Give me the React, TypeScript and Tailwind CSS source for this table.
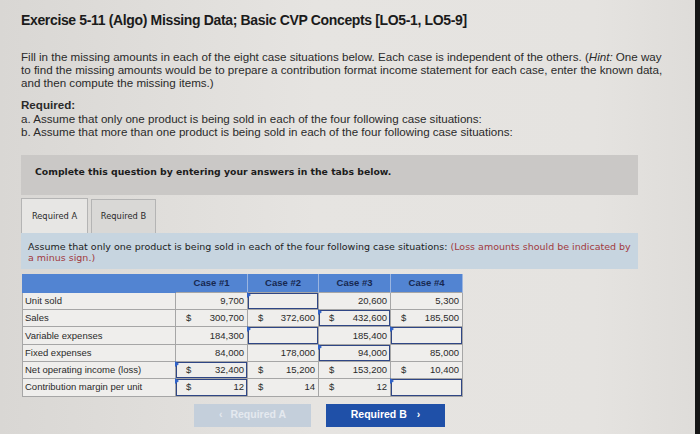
import React from 'react';

type Cell = { v?: string; d?: boolean; inp?: boolean };

const rows: { label: string; cells: Cell[] }[] = [
    { label: 'Unit sold', cells: [{ v: '9,700' }, { inp: true }, { v: '20,600' }, { v: '5,300' }] },
    {
        label: 'Sales',
        cells: [
            { v: '300,700', d: true },
            { v: '372,600', d: true },
            { v: '432,600', d: true, inp: true },
            { v: '185,500', d: true },
        ],
    },
    { label: 'Variable expenses', cells: [{ v: '184,300' }, { inp: true }, { v: '185,400' }, { inp: true }] },
    { label: 'Fixed expenses', cells: [{ v: '84,000' }, { v: '178,000' }, { v: '94,000', inp: true }, { v: '85,000' }] },
    {
        label: 'Net operating income (loss)',
        cells: [
            { v: '32,400', d: true, inp: true },
            { v: '15,200', d: true },
            { v: '153,200', d: true },
            { v: '10,400', d: true },
        ],
    },
    {
        label: 'Contribution margin per unit',
        cells: [{ v: '12', d: true, inp: true }, { v: '14', d: true }, { v: '12', d: true }, { inp: true }],
    },
];

function CaseCell({ c }: { c: Cell }) {
    return (
        <td className="relative border border-[#a6a6a6] p-0">
            <div
                className={
                    c.inp
                        ? 'flex h-[16.3px] items-center justify-between border-[1.5px] border-[#2f4685] pl-[9px] pr-[2px]'
                        : 'flex h-[16.3px] items-center justify-between pl-[10px] pr-[3px]'
                }
            >
                <span>{c.d ? '$' : ''}</span>
                <span>{c.v}</span>
            </div>
            {c.inp && (
                <span className="absolute left-[-1px] top-[-1px] h-0 w-0 border-y-[3px] border-l-[4px] border-y-transparent border-l-[#2f62c8]" />
            )}
        </td>
    );
}

export default function App() {
    return (
        <div className="flex h-[434px] w-[700px] overflow-hidden bg-[linear-gradient(90deg,#d9d7d4,#e6e4e1_45%,#e5e3e0_85%,#dedcd9)] text-[#222]">
            <div className="flex-1 pl-[21px] pt-[11px] font-['Liberation_Sans',Arial,sans-serif]">
                <h1 className="text-[14px] font-bold leading-[18px] tracking-[-0.35px] text-[#1b1b1b]">
                    Exercise 5-11 (Algo) Missing Data; Basic CVP Concepts [LO5-1, LO5-9]
                </h1>

                <p className="mt-[22px] w-[645px] text-[11.6px] leading-[12.8px] text-[#2a2a2a]">
                    Fill in the missing amounts in each of the eight case situations below. Each case is independent of
                    the others. (<i>Hint:</i> One way to find the missing amounts would be to prepare a contribution
                    format income statement for each case, enter the known data, and then compute the missing items.)
                </p>

                <div className="mt-[9px] text-[11.6px] leading-[13.5px] text-[#2a2a2a]">
                    <div className="font-bold">Required:</div>
                    <div>a. Assume that only one product is being sold in each of the four following case situations:</div>
                    <div>b. Assume that more than one product is being sold in each of the four following case situations:</div>
                </div>

                <div className="mt-[16px] flex h-[40px] w-[617px] items-center bg-[#cac8c6] pl-[14px] pb-[6px] font-['DejaVu_Sans',Verdana,sans-serif] text-[9.3px] font-bold text-[#1c1c1c]">
                    Complete this question by entering your answers in the tabs below.
                </div>

                <div className="mt-[3px] flex w-[617px] items-end gap-[3px] font-['DejaVu_Sans',Verdana,sans-serif] text-[8.3px] text-[#2a2a2a]">
                    <div className="flex h-[35px] w-[67px] items-center justify-center border border-b-0 border-[#b4b4b4] bg-[#e7e6e4]">
                        Required A
                    </div>
                    <div className="flex h-[34px] w-[65px] items-center justify-center border border-b-0 border-[#b4b4b4] bg-[#d9d8d6]">
                        Required B
                    </div>
                </div>

                <div className="w-[617px] bg-[#c7d5e0] px-[7px] pb-[6px] pt-[8px] font-['DejaVu_Sans',Verdana,sans-serif] text-[9.5px] leading-[11px] text-[#1c1c1c]">
                    Assume that only one product is being sold in each of the four following case situations:{' '}
                    <span className="text-[#a13a40]">(Loss amounts should be indicated by a minus sign.)</span>
                </div>

                <table className="mt-[5px] ml-[1px] w-[440px] table-fixed border-collapse text-[9.5px] text-[#2a2a2a]">
                    <colgroup>
                        <col className="w-[153px]" />
                        <col className="w-[72px]" />
                        <col className="w-[71px]" />
                        <col className="w-[72px]" />
                        <col className="w-[72px]" />
                    </colgroup>
                    <thead>
                        <tr className="h-[18px] bg-[#5284d2] text-[#172850]">
                            <th className="border border-[#5284d2]" />
                            {['Case #1', 'Case #2', 'Case #3', 'Case #4'].map((h) => (
                                <th key={h} className="border-x border-[#9bb5e0] text-center font-bold">
                                    {h}
                                </th>
                            ))}
                        </tr>
                    </thead>
                    <tbody className="bg-[#efeeec]">
                        {rows.map((r) => (
                            <tr key={r.label}>
                                <td className="border border-[#a6a6a6] pl-[2px]">{r.label}</td>
                                {r.cells.map((c, i) => (
                                    <CaseCell key={i} c={c} />
                                ))}
                            </tr>
                        ))}
                    </tbody>
                </table>

                <div className="mt-[7px] ml-[173px] flex gap-[15px] text-[10.5px] font-bold">
                    <div className="flex h-[23px] w-[117px] items-center justify-center gap-[8px] bg-[#c4cfdb] text-[#e4e9ef]">
                        <span>&lsaquo;</span>
                        <span>Required A</span>
                    </div>
                    <div className="flex h-[23px] w-[119px] items-center justify-center gap-[10px] bg-[#1f50a8] text-white">
                        <span>Required B</span>
                        <span>&rsaquo;</span>
                    </div>
                </div>
            </div>
            <div className="w-[5px] bg-[#161616]" />
        </div>
    );
}
